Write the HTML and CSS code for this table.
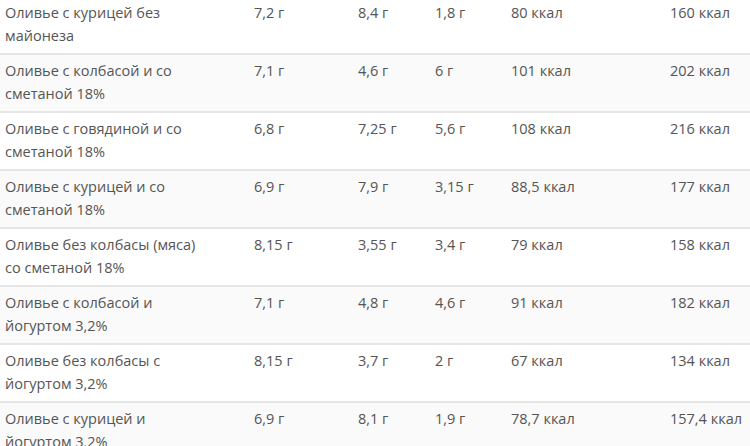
FILE: index.html
```html
<!DOCTYPE html>
<html lang="ru">
<head>
<meta charset="utf-8">
<link rel="stylesheet" href="styles.css">
</head>
<body>
<div class="wrap">
<table class="nutr">
<colgroup>
<col class="c1"><col class="c2"><col class="c3"><col class="c4"><col class="c5"><col class="c6">
</colgroup>
<tbody>
<tr><td>Оливье с курицей без майонеза</td><td>7,2 г</td><td>8,4 г</td><td>1,8 г</td><td>80 ккал</td><td>160 ккал</td></tr>
<tr><td>Оливье с колбасой и со сметаной 18%</td><td>7,1 г</td><td>4,6 г</td><td>6 г</td><td>101 ккал</td><td>202 ккал</td></tr>
<tr><td>Оливье с говядиной и со сметаной 18%</td><td>6,8 г</td><td>7,25 г</td><td>5,6 г</td><td>108 ккал</td><td>216 ккал</td></tr>
<tr><td>Оливье с курицей и со сметаной 18%</td><td>6,9 г</td><td>7,9 г</td><td>3,15 г</td><td>88,5 ккал</td><td>177 ккал</td></tr>
<tr><td>Оливье без колбасы (мяса) со сметаной 18%</td><td>8,15 г</td><td>3,55 г</td><td>3,4 г</td><td>79 ккал</td><td>158 ккал</td></tr>
<tr><td>Оливье с колбасой и йогуртом 3,2%</td><td>7,1 г</td><td>4,8 г</td><td>4,6 г</td><td>91 ккал</td><td>182 ккал</td></tr>
<tr><td>Оливье без колбасы с йогуртом 3,2%</td><td>8,15 г</td><td>3,7 г</td><td>2 г</td><td>67 ккал</td><td>134 ккал</td></tr>
<tr><td>Оливье с курицей и йогуртом 3,2%</td><td>6,9 г</td><td>8,1 г</td><td>1,9 г</td><td>78,7 ккал</td><td>157,4 ккал</td></tr>
</tbody>
</table>
</div>
</body>
</html>
```

FILE: styles.css
```css
html, body {
  margin: 0;
  padding: 0;
  background: #fff;
  overflow: hidden;
}
.wrap {
  margin-top: -3px;
}
.nutr {
  width: 750px;
  table-layout: fixed;
  border-collapse: collapse;
  font-family: "Open Sans", sans-serif;
  font-size: 14.5px;
  line-height: 23px;
  color: #555;
}
.c1 { width: 249px; }
.c2 { width: 104px; }
.c3 { width: 77px; }
.c4 { width: 76px; }
.c5 { width: 159px; }
.c6 { width: 85px; }
.nutr td {
  padding: 4px 5px 6px;
  vertical-align: top;
  border-bottom: 2px solid #e6e6e6;
  height: 46px;
  box-sizing: content-box;
}
.nutr td:first-child {
  padding-right: 38px;
}
.nutr tr:nth-child(even) td {
  background: #fafafa;
}
```
